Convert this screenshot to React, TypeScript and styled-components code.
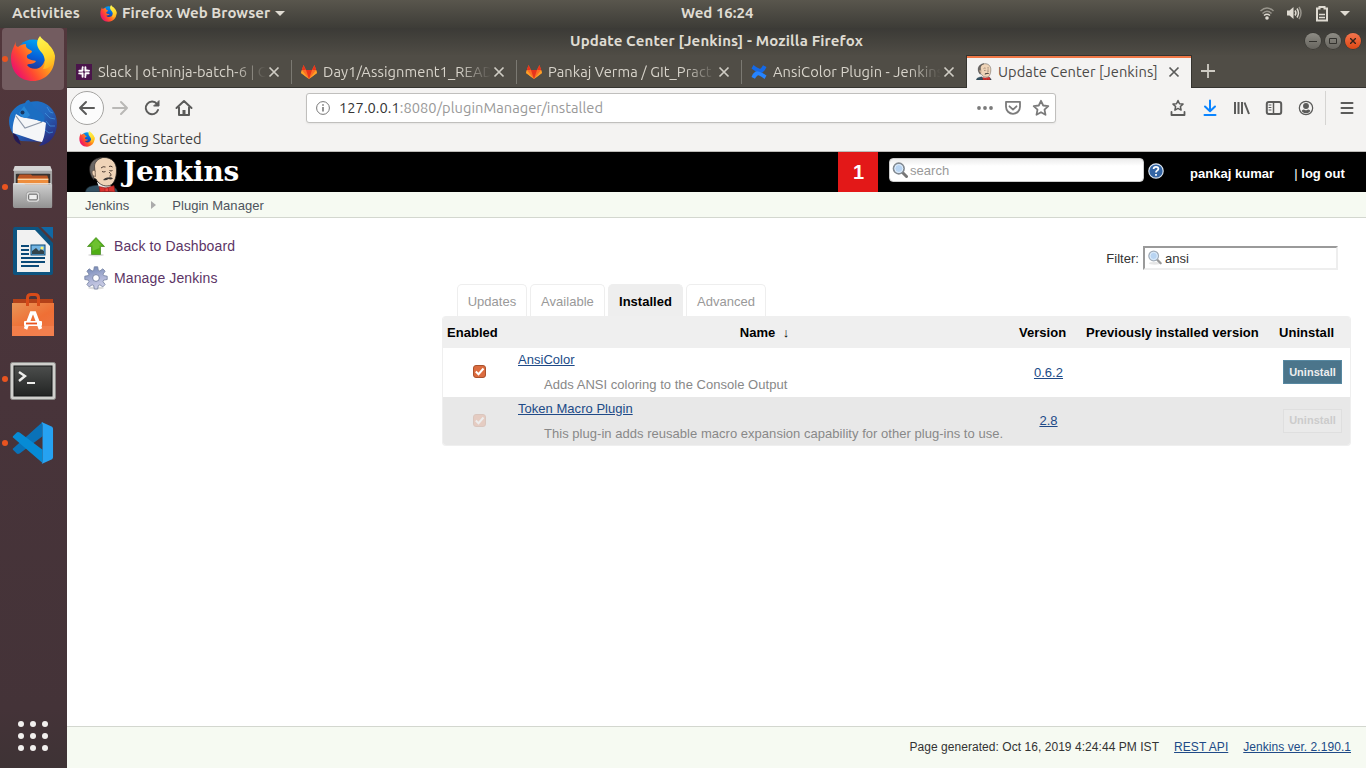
import React from 'react';
import styled, { createGlobalStyle, css } from 'styled-components';

const ui = `"Ubuntu", "Noto Sans", "Open Sans", sans-serif`;
const web = `"Liberation Sans", Arial, sans-serif`;

const Global = createGlobalStyle`
  * { box-sizing: border-box; }
  html, body { margin: 0; padding: 0; overflow: hidden; background: #fff; }
  svg { display: block; flex: none; }
`;

/* ---------- desktop shell ---------- */
const Desktop = styled.div`
  width: 1366px;
  height: 768px;
  display: flex;
  flex-direction: column;
  overflow: hidden;
  font-family: ${ui};
`;
const TopBar = styled.header`
  height: 28px;
  flex: none;
  display: grid;
  grid-template-columns: 669px auto 1fr;
  align-items: center;
  padding: 0 16px 2px 12px;
  background: linear-gradient(#59564d, #3d3c37);
  color: #dfdbd2;
`;
const BarGroup = styled.div<{ $end?: boolean }>`
  display: flex;
  align-items: center;
  height: 26px;
  justify-content: ${p => (p.$end ? 'flex-end' : 'flex-start')};
`;
const BarText = styled.span<{ $ls?: number; $ml?: number }>`
  font-size: 15px;
  font-weight: 600;
  line-height: 20px;
  white-space: nowrap;
  letter-spacing: ${p => p.$ls ?? 0}px;
  margin-left: ${p => p.$ml ?? 0}px;
`;
const Caret = styled.i<{ $ml: number }>`
  border: 5px solid transparent;
  border-top-color: #dfdbd2;
  border-bottom: 0;
  margin-left: ${p => p.$ml}px;
`;
const Spacer = styled.span<{ $w: number }>`
  width: ${p => p.$w}px;
  flex: none;
`;
const Work = styled.div`
  flex: 1;
  display: flex;
  min-height: 0;
`;
const Dock = styled.nav`
  width: 67px;
  flex: none;
  display: flex;
  flex-direction: column;
  gap: 2px;
  background: linear-gradient(#52373c, #48343a 50%, #443338 92%, #3e3335);
`;
const DockItem = styled.div<{ $active?: boolean; $running?: boolean }>`
  position: relative;
  width: 62px;
  height: 62px;
  margin-left: 2px;
  border-radius: 4px;
  display: flex;
  align-items: center;
  justify-content: center;
  background: ${p => (p.$active ? '#735c60' : 'transparent')};
  ${p => p.$running && css`
    &::before {
      content: '';
      position: absolute;
      left: 0;
      top: 28px;
      width: 6px;
      height: 6px;
      border-radius: 50%;
      background: #e95420;
    }
  `}
`;
const AppsButton = styled.div`
  margin: auto 0 17px 18px;
  display: grid;
  grid-template-columns: repeat(3, 6px);
  gap: 6px;
`;
const AppsDot = styled.i`
  width: 6px;
  height: 6px;
  border-radius: 50%;
  background: #f2f0ee;
`;

/* ---------- browser window ---------- */
const Window = styled.main`
  flex: 1;
  display: flex;
  flex-direction: column;
  min-width: 0;
`;
const TitleBar = styled.div`
  height: 27px;
  flex: none;
  display: grid;
  grid-template-columns: 1fr auto 1fr;
  align-items: center;
  padding-bottom: 1px;
  background: linear-gradient(#3b3a36, #4f4c45);
  color: #dfdbd2;
`;
const WinButtons = styled.div`
  display: flex;
  gap: 4px;
  justify-content: flex-end;
  padding-right: 5px;
`;
const WinButton = styled.span<{ $close?: boolean }>`
  width: 16px;
  height: 16px;
  border-radius: 50%;
  display: grid;
  place-items: center;
  background: ${p => (p.$close ? 'linear-gradient(#f4754e, #dd4814)' : 'linear-gradient(#8e8c85, #66645e)')};
  box-shadow: 0 0 0 0.5px #33322e;
`;
const TabStrip = styled.div`
  height: 33px;
  flex: none;
  display: flex;
  background: linear-gradient(#504d46 31px, #504d46 32px, #353430 32px);
`;
const Tab = styled.div<{ $active?: boolean; $divider?: boolean }>`
  position: relative;
  width: 225px;
  height: 33px;
  display: flex;
  align-items: center;
  padding: 0 10px 0 9px;
  gap: 6px;
  color: ${p => (p.$active ? '#4b4a48' : '#d8d4cb')};
  ${p => p.$active && css`
    width: 224px;
    height: 32px;
    margin-top: 1px;
    padding-bottom: 3px;
    background: #f4f3f2;
    border-top: 2px solid #f07746;
    box-shadow: -1px -1px 0 #35342f, 1px -1px 0 #35342f;
    clip-path: inset(-1px -1px 0 -1px);
  `}
  ${p => p.$divider && css`
    &::after {
      content: '';
      position: absolute;
      right: 0;
      top: 5px;
      width: 1px;
      height: 24px;
      background: #7b7972;
    }
  `}
`;
const TabLabel = styled.span<{ $fade?: boolean }>`
  width: 168px;
  flex: none;
  white-space: nowrap;
  font-size: 14.67px;
  line-height: 22px;
  letter-spacing: 0.07px;
  ${p => p.$fade && css`mask-image: linear-gradient(to right, #000 136px, transparent 168px);`}
`;
const TabClose = styled.span`
  margin-left: -4px;
`;
const NewTab = styled.span`
  display: grid;
  place-items: center;
  width: 33px;
  padding-bottom: 1px;
`;
const NavBar = styled.div`
  height: 40px;
  flex: none;
  display: flex;
  align-items: center;
  background: #f4f3f2;
  padding-left: 3px;
`;
const BackButton = styled.span`
  width: 34px;
  height: 34px;
  flex: none;
  border: 1px solid #a5a4a2;
  border-radius: 50%;
  display: grid;
  place-items: center;
  background: #fcfcfc;
`;
const ToolButton = styled.span`
  width: 32px;
  height: 32px;
  flex: none;
  display: grid;
  place-items: center;
`;
const UrlBox = styled.div`
  width: 750px;
  height: 30px;
  flex: none;
  display: flex;
  align-items: center;
  border: 1px solid #c0bfbd;
  border-radius: 3px;
  background: #fff;
  margin: 0 106px;
  padding: 0 5px 0 9px;
  box-shadow: 0 1px 2px rgba(0, 0, 0, 0.06);
`;
const UrlText = styled.span`
  flex: 1;
  font-size: 14.67px;
  line-height: 22px;
  color: #999;
  margin-left: 9px;
  letter-spacing: 0.04px;
`;
const UrlHost = styled.span`
  color: #353535;
`;
const NavRule = styled.i`
  width: 1px;
  height: 34px;
  flex: none;
  margin: 0 5px 0 3px;
  background: #d5d4d2;
`;
const Bookmarks = styled.div`
  height: 24px;
  flex: none;
  display: flex;
  align-items: center;
  gap: 4px;
  padding: 0 12px 1px;
  background: #f4f3f2;
  border-bottom: 1px solid #bdbbb8;
  color: #3f3f3f;
`;
const BookmarkText = styled.span`
  font-size: 14.67px;
  line-height: 20px;
  letter-spacing: 0.05px;
`;

/* ---------- Jenkins page ---------- */
const Page = styled.section`
  flex: 1;
  display: flex;
  flex-direction: column;
  background: #fff;
  font-family: ${web};
  font-size: 13px;
  letter-spacing: 0.03px;
  color: #333;
`;
const Head = styled.div`
  height: 40px;
  flex: none;
  display: flex;
  background: #000;
  padding-left: 18px;
  color: #fff;
`;
const LogoSlot = styled.span`
  width: 34px;
  padding-top: 4px;
`;
const Wordmark = styled.span`
  flex: 1;
  font-family: "DejaVu Serif", serif;
  font-weight: bold;
  font-size: 28px;
  line-height: 40px;
  letter-spacing: -0.2px;
  margin-left: 4px;
`;
const Alert = styled.span`
  width: 40px;
  text-align: center;
  background: #e31818;
  font-size: 20px;
  line-height: 40px;
  font-weight: bold;
  padding-left: 1px;
`;
const HeadSearch = styled.div`
  width: 255px;
  height: 24px;
  margin: 6px 4px 0 11px;
  padding: 0 2px;
  display: flex;
  align-items: center;
  gap: 2px;
  border-radius: 4px;
  border: 1px solid #ccc;
  background: linear-gradient(#ececec, #fff 7px);
  color: #999;
`;
const HelpBox = styled.span`
  margin-top: 11px;
`;
const HeadLinks = styled.div`
  width: 202px;
  padding: 14px 0 0 26px;
  line-height: 16px;
  font-weight: bold;
  display: flex;
  gap: 20px;
  white-space: nowrap;
`;
const Bar = styled.span`
  font-weight: normal;
`;
const Crumbs = styled.div`
  height: 26px;
  flex: none;
  display: flex;
  align-items: center;
  padding: 1px 18px 0;
  background: #f6faf2;
  border-bottom: 1px solid #d3d7cf;
  color: #4d545d;
`;
const CrumbArrow = styled.i`
  border: 4px solid transparent;
  border-left: 5px solid #ababab;
  border-right: 0;
  margin: 0 16px 0 22px;
`;
const Body = styled.div`
  flex: 1;
  display: flex;
`;
const Side = styled.aside`
  width: 375px;
  padding: 16px 0 0 17px;
`;
const SideLink = styled.div`
  height: 32px;
  padding-bottom: 8px;
  display: flex;
  align-items: center;
  gap: 6px;
  color: #5c3566;
  font-size: 14px;
  letter-spacing: 0.12px;
`;
const Main = styled.div`
  width: 909px;
  padding-top: 28px;
`;
const FilterRow = styled.div`
  display: flex;
  justify-content: flex-end;
  align-items: center;
  gap: 4px;
  padding-right: 13px;
`;
const FilterBox = styled.div`
  width: 195px;
  height: 24px;
  border: 2px solid;
  border-color: #9a9a9a #eee #eee #9a9a9a;
  padding-left: 2px;
  display: flex;
  align-items: center;
  gap: 2px;
`;
const PageTabs = styled.div`
  display: flex;
  gap: 3px;
  margin: 14px 0 0 15px;
`;
const PageTab = styled.span<{ $active?: boolean; $w: number }>`
  width: ${p => p.$w}px;
  height: 32px;
  line-height: 33px;
  text-align: center;
  border: 1px solid #eee;
  border-bottom: 0;
  border-radius: 5px 5px 0 0;
  color: ${p => (p.$active ? '#000' : '#999')};
  font-weight: ${p => (p.$active ? 'bold' : 'normal')};
  background: ${p => (p.$active ? '#eee' : '#fff')};
`;
const Table = styled.div`
  border: 1px solid #efefef;
  border-top: 0;
  border-radius: 4px;
  overflow: hidden;
`;
const columns = css`
  display: grid;
  grid-template-columns: 70px 501px 67px 193px 76px;
`;
const HeadRow = styled.div`
  ${columns}
  height: 32px;
  line-height: 33px;
  background: #efefef;
  color: #000;
  font-weight: bold;
`;
const HeadCell = styled.span<{ $name?: boolean }>`
  padding-left: ${p => (p.$name ? 2 : 5)}px;
  text-align: ${p => (p.$name ? 'center' : 'left')};
  white-space: pre;
`;
const FirstHeadCell = styled(HeadCell)`
  padding-left: 4px;
`;
const Row = styled.div<{ $alt?: boolean }>`
  ${columns}
  height: ${p => (p.$alt ? 48 : 49)}px;
  background: ${p => (p.$alt ? '#e8e8e8' : '#fff')};
`;
const CheckCell = styled.div<{ $dim?: boolean }>`
  padding: 17px 0 0 29.500px;
  opacity: ${p => (p.$dim ? 0.22 : 1)};
`;
const NameCell = styled.div`
  padding: 3px 0 0 5px;
`;
const Link = styled.a`
  color: #204a87;
  text-decoration: underline;
  line-height: 17px;
`;
const Excerpt = styled.div`
  margin: 8px 0 0 26px;
  line-height: 17px;
  color: #888;
  white-space: nowrap;
`;
const VersionCell = styled.div<{ $alt?: boolean }>`
  padding: ${p => (p.$alt ? 15 : 16)}px 0 0 2px;
  text-align: center;
`;
const Uninstall = styled.span<{ $off?: boolean }>`
  width: 59px;
  height: 24px;
  margin: 12px 0 0 9px;
  font-size: 11px;
  line-height: ${p => (p.$off ? 21 : 22)}px;
  font-weight: bold;
  text-align: center;
  border: 1px solid ${p => (p.$off ? '#dfdfdf' : '#5788a1')};
  background: ${p => (p.$off ? '#eaeaea' : '#4b758b')};
  color: ${p => (p.$off ? '#ccc' : '#eee')};
`;
const Footer = styled.footer`
  height: 42px;
  flex: none;
  display: flex;
  justify-content: flex-end;
  align-items: center;
  gap: 15px;
  padding: 0 15px 1px 0;
  font-size: 12px;
  letter-spacing: 0.05px;
  background: #f6faf2;
  border-top: 1px solid #d3d7cf;
`;

/* ---------- icons ---------- */
const Firefox = ({ size, id }: { size: number; id: string }) => (
  <svg width={size} height={size} viewBox="-1 0 46 46">
    <defs>
      <linearGradient id={id + 'a'} x1="0.95" y1="0.2" x2="0.1" y2="0.75">
        <stop offset="0" stopColor="#ffd226" /><stop offset="0.35" stopColor="#ff9a1b" />
        <stop offset="0.7" stopColor="#ff4a30" /><stop offset="1" stopColor="#ee1568" />
      </linearGradient>
      <linearGradient id={id + 'b'} x1="0.7" y1="0" x2="0.4" y2="1">
        <stop offset="0" stopColor="#00a8f5" /><stop offset="0.5" stopColor="#0560d8" /><stop offset="1" stopColor="#302175" />
      </linearGradient>
      <linearGradient id={id + 'c'} x1="0.4" y1="0" x2="0.6" y2="1">
        <stop offset="0" stopColor="#fff44f" /><stop offset="0.6" stopColor="#ffd92b" /><stop offset="1" stopColor="#ffae1e" />
      </linearGradient>
    </defs>
    <circle cx="22" cy="21" r="17.500" fill={`url(#${id}b)`} />
    <path d="M5 5 C4 9 5 10 7 11 C9 9 12 8 15 8 C14 12 18 13 21 15 C21 18 16 18 16 20 C15 23 19 24 25 25 C23 29 18 27 16 29 C19 34 30 35 33 26 C36 22 37 16 36 10 L43 18 C46 32 36 45 22 45 C9 45 0 36 0 22 C0 15 3 11 5 5Z" fill={`url(#${id}a)`} />
    <path d="M29 0 C24 6 26 12 31 17 C34 21 35 27 32 33 C39 33 44 27 44 20 C43 15 41 12 38 9 C37 6 32 5 29 0Z" fill={`url(#${id}c)`} />
  </svg>
);
const Thunderbird = () => (
  <svg width="48" height="48" viewBox="0 0 48 48">
    <defs>
      <linearGradient id="tb" x1="0" y1="0" x2="0.7" y2="1">
        <stop stopColor="#1679cc" /><stop offset="0.55" stopColor="#2468bf" /><stop offset="1" stopColor="#2b2c7d" />
      </linearGradient>
    </defs>
    <path d="M20 1 L21 3 C35 -1 48 10 48 24 C48 37 40 46 30 47 L33 43 L12 42 C5 38 0 31 0 22 C0 12 9 5 16 4 C17 2 18 1 20 1Z" fill="url(#tb)" />
    <path d="M4 33 L9 38 L12 46 C6 43 4 39 4 33Z" fill="#251a55" />
    <path d="M7 15 L12 18 L33 22 L37 24 C36 31 36 37 33 43 L28 42 L4 34 C3 27 5 21 7 15Z" fill="#f5f6f8" />
    <path d="M7 17 L16 29 L33 23" fill="none" stroke="#8d97a8" strokeWidth="1.2" />
    <path d="M21 2 C14 7 14 14 20 18 L33 23 C38 21 35 15 31 13 C27 11 24 8 21 2Z" fill="#1c6ec2" />
    <path d="M10 14 L15 7 L21 16 L18 19 Q12 19 10 14Z" fill="#2787d5" />
    <circle cx="13.500" cy="13.500" r="2" fill="#173862" />
    <path d="M38 8 l3 5 l3 1 M36 14 l5 5 l5 1 M37 22 l4 5 l5 0 M36 31 l4 3 l4 -1" stroke="#4698df" strokeWidth="1" opacity="0.7" fill="none" />
  </svg>
);
const FilesIcon = () => (
  <svg width="42" height="44" viewBox="0 0 44 46">
    <defs>
      <linearGradient id="fl" x1="0" x2="0" y1="0" y2="1"><stop stopColor="#d0d0d0" /><stop offset="1" stopColor="#929292" /></linearGradient>
    </defs>
    <path d="M3 1 h37 l2 5 v37 q0 2 -2 2 h-36 q-2 0 -2 -2 v-37Z" fill="#a6a6a6" />
    <path d="M3 1 h37 l2 5 h-41Z" fill="#d4d4d4" />
    <rect x="4" y="9" width="36" height="14" rx="1" fill="#373432" />
    <path d="M6 13 l2 -3 h12 l1 1 h16 l1 3 v6 h-32Z" fill="#b95524" />
    <rect x="6" y="14" width="32" height="7" fill="#ee8d3c" />
    <path d="M6 15 h32" stroke="#f8d8b0" strokeWidth="1.2" />
    <path d="M1 19 h11 l2 1 h28 v24 q0 1 -2 1 h-37 q-2 0 -2 -2Z" fill="url(#fl)" />
    <path d="M2 19.500 h39" stroke="#ececec" />
    <rect x="15" y="28" width="14" height="11" rx="3" fill="#ddd" stroke="#999" />
    <rect x="17.500" y="30.500" width="9" height="6" rx="1" fill="#eee" stroke="#555" />
  </svg>
);
const WriterIcon = () => (
  <svg width="42" height="50" viewBox="0 0 42 50">
    <path d="M3 1 h23 l15 16 v30 q0 2 -2 2 h-35 q-3 0 -3 -2 v-43 q0 -3 2 -3Z" fill="#0d5480" />
    <path d="M5 4 h18 l15 16 v26 h-33Z" fill="#f1f1f1" />
    <path d="M29 1 h12 v12Z" fill="#1068a4" />
    <path d="M9 20 h8 M9 24 h8 M9 28 h8 M9 32 h24 M9 36 h24 M9 40 h18" stroke="#0b4a78" strokeWidth="2" />
    <rect x="19" y="19" width="14" height="10" fill="#72b4e2" stroke="#0b4a78" />
    <path d="M20 28 v-3 l4 -3 l3 3 l2 -2 l3 2 v3Z" fill="#32434b" />
    <circle cx="30" cy="22" r="1.500" fill="#fff36b" />
  </svg>
);
const SoftwareIcon = () => (
  <svg width="44" height="46" viewBox="0 1 44 46">
    <defs><linearGradient id="sw" x1="0" x2="0.7" y1="0" y2="1"><stop stopColor="#e99557" /><stop offset="0.6" stopColor="#ef6f35" /><stop offset="1" stopColor="#ed7443" /></linearGradient></defs>
    <path d="M2 8 h40 v5 h-40Z" fill="#b44119" />
    <path d="M1 12 h42 v33 h-42Z" fill="url(#sw)" />
    <path d="M1 35 h42 v10 h-42Z" fill="#f58756" opacity="0.6" />
    <path d="M16.500 15 v-8 q0 -3.500 3.500 -3.500 h4 q3.500 0 3.500 3.500 v8" fill="none" stroke="#d84b19" strokeWidth="3" />
    <path d="M14.500 38 L20.500 22 h3 L29.500 38" fill="none" stroke="#fff" strokeWidth="3.600" />
    <rect x="13" y="30" width="18" height="5" rx="1" fill="#fff" />
    <path d="M15 32.500 h11" stroke="#e95420" strokeWidth="1.800" />
  </svg>
);
const TerminalIcon = () => (
  <svg width="46" height="42" viewBox="0 -4 46 42">
    <defs><linearGradient id="tm" x1="0" x2="0" y1="0" y2="1"><stop stopColor="#4c4e4d" /><stop offset="1" stopColor="#222423" /></linearGradient></defs>
    <rect x="0.500" y="0.500" width="45" height="37" rx="2" fill="#cfcfcc" stroke="#8b8b89" />
    <rect x="4" y="4" width="38" height="30" fill="url(#tm)" stroke="#151716" />
    <path d="M9 10 l6 4 l-6 5" fill="none" stroke="#eeeeec" strokeWidth="2.400" />
    <path d="M17 21 h8" stroke="#eeeeec" strokeWidth="2" />
  </svg>
);
const CodeIcon = () => (
  <svg width="42" height="42" viewBox="0 0 44 44">
    <path d="M1 29 L5 33 Q6 34 8 33 L32 15 V0 L2 27 Q0 28 1 29Z" fill="#0a72b8" />
    <path d="M1 15 L5 11 Q6 10 8 11 L32 29 V43 L2 17 Q0 16 1 15Z" fill="#068bd5" />
    <path d="M31 0 L42 5 Q43 6 43 7 V37 Q43 38 42 39 L31 44 Q32 43 32 40 V3Z" fill="#26a2f2" />
  </svg>
);
const SlackIcon = () => (
  <svg width="16" height="16" viewBox="0 0 16 16">
    <rect width="16" height="16" fill="#4a154b" />
    <path d="M6.400 6.700 H3.300 M6.700 3.200 v.3 M9.400 3.300 V6.700 M12.700 6.600 h.3 M9.600 9.300 H12.700 M9.300 12.700 v.3 M6.600 12.700 V9.300 M3.200 9.400 h.3 M6.500 4.500 v2 M9.500 6.500 h2 M9.500 9.500 v2 M6.500 9.500 h-2" stroke="#fff" strokeWidth="1.900" strokeLinecap="round" />
  </svg>
);
const GitlabIcon = () => (
  <svg width="16" height="16" viewBox="0 0 16 16">
    <path d="M2.500 1 L0 9 L8 15 L16 9 L13.500 1 L11 6 H5Z" fill="#fc6d26" />
    <path d="M5 6 H11 L8 15Z" fill="#e8341c" />
    <path d="M0.800 6 L0 9 L8 15Z M15.200 6 L16 9 L8 15Z" fill="#fca326" />
    <path d="M2.500 1 L0.800 6 H5Z M13.500 1 L11 6 H15.200Z" fill="#e8341c" />
  </svg>
);
const ConfluenceIcon = () => (
  <svg width="16" height="16" viewBox="0 0 16 16">
    <path d="M2.500 1 L0.500 4.500 Q8 10 11.500 8.500 Q14 7 15.500 3 L12 1.200 Q10 5 8.500 4.800 Q6 4 2.500 1Z" fill="#1469e8" />
    <path d="M13.500 15 L15.500 11.500 Q8 6 4.500 7.500 Q2 9 0.500 13 L4 14.800 Q6 11 7.500 11.200 Q10 12 13.500 15Z" fill="#2684ff" />
  </svg>
);
const Butler = ({ w, h }: { w: number; h: number }) => (
  <svg width={w} height={h} viewBox="0 0 34 36" preserveAspectRatio="none">
    <path d="M0.500 36 Q1 31 7 30 L13 29 L28 31 Q32 32 32.500 36Z" fill="#335061" stroke="#1b2a33" strokeWidth="0.600" />
    <path d="M12 26 L14 31 L22 33 L27 31 L24 28Z" fill="#f4f1ee" />
    <path d="M7 20 C4 12 8 2 18 1.500 C27 1 31.500 7 31.500 14 C31.500 22 29 30 22 30 C17 30 13 27 11 23 Q8 23 7 20Z" fill="#efd4b8" stroke="#2b2724" strokeWidth="0.800" />
    <path d="M5 17 C3 8 8 2 17 1.500 C12 4 10 6 9.500 10 L10 16 L8.500 17 L9 24 Q6 21 5 17Z" fill="#6a6765" stroke="#25201f" strokeWidth="0.600" />
    <path d="M10 14.500 Q7 13.500 7 17 Q7.500 20.500 10.500 20.500Z" fill="#efd4b8" stroke="#5d4a3d" strokeWidth="0.700" />
    <path d="M16 12 q2 -2 4.500 -1 M24 10.500 q2 -1 3.500 0.500 M17 15.500 q2 1 3.500 0 M24.500 14.500 q1.500 1 3 0 M24 16 q4 4 0.500 4" stroke="#3b2d25" fill="none" strokeWidth="0.900" />
    <path d="M18 24 q2 -3 5 -2.500 q3 -1 5 1 q-2 1.500 -4.500 0.500 q-2.500 2 -5.500 1Z" fill="#3d3835" />
    <path d="M14 30.500 L21 32 L29 29.500 L30 36 L22.500 35.500 L15 36Z" fill="#d8332e" stroke="#821d1a" strokeWidth="0.600" />
    <path d="M20 32 h3.500 v3.500 h-3.500Z" fill="#ef3d3a" stroke="#821d1a" strokeWidth="0.500" />
  </svg>
);
const Close = ({ c }: { c: string }) => (
  <svg width="12" height="12" viewBox="0 0 12 12"><path d="M1.500 1.500 l9 9 M10.500 1.500 l-9 9" stroke={c} strokeWidth="1.700" /></svg>
);
const Star = ({ s = 18 }: { s?: number }) => (
  <svg width={s} height={s} viewBox="0 0 18 18"><path d="M9 1.800 l2.200 4.700 5.100 .6 -3.800 3.500 1 5.200 -4.500 -2.600 -4.500 2.600 1 -5.200 -3.800 -3.500 5.100 -.6Z" fill="none" stroke="#7b7b7b" strokeWidth="1.800" strokeLinejoin="round" /></svg>
);
const Glyph = ({ children, c = '#5b5b5a', s = 18, w = 2 }: { children: React.ReactNode; c?: string; s?: number; w?: number }) => (
  <svg width={s} height={s} viewBox="0 0 18 18" fill="none" stroke={c} strokeWidth={w} strokeLinecap="round" strokeLinejoin="round">{children}</svg>
);
const Magnifier = ({ soft }: { soft?: boolean }) => (
  <svg width="16" height="16" viewBox={soft ? '-0.500 0 17.500 17.500' : '0 0 16 16'}>
    {soft && <ellipse cx="8" cy="14.500" rx="6.500" ry="1.500" fill="#e6e6e6" />}
    <path d="M10.500 10.500 l4 4" stroke={soft ? '#999' : '#777'} strokeWidth={soft ? 2.4 : 3} strokeLinecap="round" />
    <circle cx="6.800" cy="6.500" r="5.300" fill="#b8d4f2" stroke={soft ? '#a3adb8' : '#838a91'} strokeWidth={soft ? 1.3 : 1.7} />
    <circle cx="6.800" cy="6.500" r="4" fill="none" stroke="#e3effb" />
  </svg>
);
const HelpIcon = () => (
  <svg width="16" height="16" viewBox="0 0 16 16">
    <circle cx="8" cy="8" r="7.200" fill="#3465a4" stroke="#dbe5f1" strokeWidth="1.200" />
    <path d="M5.600 6 Q5.700 3.800 8 3.800 Q10.400 3.800 10.400 5.800 Q10.400 7 9 7.700 Q8 8.200 8 9.500 M8 11 v1.800" fill="none" stroke="#fff" strokeWidth="1.800" />
  </svg>
);
const UpArrow = () => (
  <svg width="24" height="24" viewBox="0 0 24 24">
    <ellipse cx="12" cy="21" rx="8" ry="1.500" fill="#ddd" />
    <path d="M12 3.500 L20.500 12.500 H16.500 V20.500 H7.500 V12.500 H3.500Z" fill="#4fae14" stroke="#4e8f2a" strokeWidth="0.800" />
    <path d="M12 5 L18 11.500 H15.500 V14 L8.500 17 V11.500 H6Z" fill="#8bd34b" opacity="0.5" />
  </svg>
);
const Gear = () => (
  <svg width="24" height="24" viewBox="0 0 24 24">
    <defs><linearGradient id="gr" x1="0.2" x2="0.5" y1="0" y2="1"><stop stopColor="#7388b5" /><stop offset="0.6" stopColor="#b0b6d8" /><stop offset="1" stopColor="#cdcfe6" /></linearGradient></defs>
    <ellipse cx="12" cy="22" rx="8" ry="1.500" fill="#ddd" />
    <path d="M10.300 .8 h3.400 l.6 3.600 1.600 .6 2.900 -2.200 2.300 2.400 -2.100 2.900 .7 1.500 3.500 .6 v3.300 l-3.500 .6 -.7 1.500 2.100 2.900 -2.300 2.400 -2.900 -2.100 -1.600 .7 -.6 3.500 h-3.400 l-.6 -3.500 -1.600 -.7 -2.900 2.100 -2.300 -2.400 2.100 -2.900 -.7 -1.500 -3.500 -.6 v-3.300 l3.500 -.6 .7 -1.500 -2.100 -2.900 2.300 -2.400 2.900 2.200 1.600 -.6Z" fill="url(#gr)" stroke="#74809f" strokeWidth="0.800" />
    <circle cx="12" cy="12" r="3.400" fill="#fff" stroke="#7985a6" />
  </svg>
);
const Checkbox = () => (
  <svg width="13" height="13" viewBox="0 0 13 13">
    <rect x="0.500" y="0.500" width="12" height="12" rx="2.500" fill="#dc6c3f" stroke="#a9522e" />
    <path d="M2.800 6.500 l2.700 2.700 l5 -5.700" fill="none" stroke="#fff" strokeWidth="2" />
  </svg>
);

const dock = [
  { icon: <Firefox size={46} id="dock" />, active: true, running: true },
  { icon: <Thunderbird /> },
  { icon: <FilesIcon />, running: true },
  { icon: <WriterIcon /> },
  { icon: <SoftwareIcon /> },
  { icon: <TerminalIcon />, running: true },
  { icon: <CodeIcon />, running: true },
];
const tabs = [
  { icon: <SlackIcon />, label: 'Slack | ot-ninja-batch-6 | O', divider: true },
  { icon: <GitlabIcon />, label: 'Day1/Assignment1_READ', divider: true },
  { icon: <GitlabIcon />, label: 'Pankaj Verma / GIt_Pract', divider: true },
  { icon: <ConfluenceIcon />, label: 'AnsiColor Plugin - Jenkins' },
  { icon: <Butler w={16} h={17} />, label: 'Update Center [Jenkins]', active: true },
];

export default function App() {
  return (
    <Desktop>
      <Global />
      <TopBar>
        <BarGroup>
          <BarText $ls={0.12}>Activities</BarText>
          <Spacer $w={20} />
          <Firefox size={17} id="top" />
          <BarText $ml={5} $ls={0.05}>Firefox Web Browser</BarText>
          <Caret $ml={5} />
        </BarGroup>
        <BarText>Wed 16:24</BarText>
        <BarGroup $end>
          <svg width="16" height="16" viewBox="0 0 16 16" fill="none" stroke="#dfdbd2" strokeWidth="1.500">
            <path d="M1.500 6 Q8 0 14.500 6 M3.500 8.500 Q8 4 12.500 8.500" opacity="0.5" />
            <path d="M5 10.500 Q8 8 11 10.500" /><circle cx="8" cy="13" r="1.800" fill="#dfdbd2" stroke="none" />
          </svg>
          <Spacer $w={11} />
          <svg width="17" height="16" viewBox="0 0 17 16" fill="none" stroke="#dfdbd2" strokeWidth="1.500">
            <path d="M1 5.500 h2.500 L7.500 2 v12 L3.500 10.500 H1Z" fill="#dfdbd2" stroke="none" />
            <path d="M9 5.500 q1.800 2.500 0 5 M11 3.500 q3 4.500 0 9" /><path d="M13 2 q4 6 0 12" opacity="0.5" />
          </svg>
          <Spacer $w={12} />
          <svg width="14" height="17" viewBox="0 0 14 17" fill="none" stroke="#dfdbd2" strokeWidth="2">
            <path d="M2 3.500 h2.500 v-1.500 h5 v1.500 h2.500 v12 h-10Z" /><path d="M4 9.500 h6 M4 12.500 h6" strokeWidth="1.400" />
          </svg>
          <Caret $ml={11} />
        </BarGroup>
      </TopBar>
      <Work>
        <Dock>
          {dock.map((d, i) => <DockItem key={i} $active={d.active} $running={d.running}>{d.icon}</DockItem>)}
          <AppsButton>{Array.from({ length: 9 }, (_, i) => <AppsDot key={i} />)}</AppsButton>
        </Dock>
        <Window>
          <TitleBar>
            <span />
            <BarText $ls={0.14}>Update Center [Jenkins] - Mozilla Firefox</BarText>
            <WinButtons>
              <WinButton><svg width="8" height="8"><path d="M0 4.500 h8" stroke="#33322e" /></svg></WinButton>
              <WinButton><svg width="8" height="8"><path d="M0.500 1.500 h7 v5 h-7Z" stroke="#33322e" fill="none" /></svg></WinButton>
              <WinButton $close><svg width="6" height="6"><path d="M0 0 l6 6 M6 0 l-6 6" stroke="#33221a" strokeWidth="1.400" /></svg></WinButton>
            </WinButtons>
          </TitleBar>
          <TabStrip>
            {tabs.map(t => (
              <Tab key={t.label} $active={t.active} $divider={t.divider}>
                {t.icon}
                <TabLabel $fade={!t.active}>{t.label}</TabLabel>
                <TabClose><Close c={t.active ? '#5b5b5a' : '#cfccc4'} /></TabClose>
              </Tab>
            ))}
            <NewTab><svg width="14" height="14"><path d="M7 0 v14 M0 7 h14" stroke="#cfccc4" strokeWidth="1.800" /></svg></NewTab>
          </TabStrip>
          <NavBar>
            <BackButton><Glyph><path d="M16 9 H2 M8 3 L2 9 L8 15" /></Glyph></BackButton>
            <ToolButton><Glyph c="#b9b8b6"><path d="M2 9 H16 M10 3 L16 9 L10 15" /></Glyph></ToolButton>
            <ToolButton><Glyph><path d="M14 5 A6.300 6.300 0 1 0 15 11" /><path d="M16 2 V7 H11Z" fill="#5b5b5a" strokeWidth="1" /></Glyph></ToolButton>
            <ToolButton><Glyph><path d="M1.500 9 L9 2 L16.500 9 M4 8.500 V16 H14 V8.500" /><path d="M9 15 v-4" strokeWidth="3" strokeLinecap="butt" /></Glyph></ToolButton>
            <UrlBox>
              <svg width="14" height="14" viewBox="0 0 14 14" fill="none" stroke="#777"><circle cx="7" cy="7" r="6.400" /><path d="M7 6 v4.500 M7 3.300 v1.500" strokeWidth="1.600" /></svg>
              <UrlText><UrlHost>127.0.0.1</UrlHost>:8080/pluginManager/installed</UrlText>
              <svg width="16" height="6"><circle cx="2" cy="3" r="1.900" fill="#7b7b7b" /><circle cx="8" cy="3" r="1.900" fill="#7b7b7b" /><circle cx="14" cy="3" r="1.900" fill="#7b7b7b" /></svg>
              <Spacer $w={11} />
              <Glyph c="#7b7b7b" w={1.8}><path d="M2 2.800 h14 v5 a7 7 0 0 1 -14 0Z M5.500 7.300 l3.500 3.300 l3.500 -3.300" /></Glyph>
              <Spacer $w={10} />
              <Star />
            </UrlBox>
            <ToolButton><Glyph w={1.8}><path d="M9 1.500 l1.500 3.200 3.500 .4 -2.600 2.400 .7 3.600 -3.100 -1.700 -3.100 1.700 .7 -3.600 -2.600 -2.400 3.500 -.4Z" strokeWidth="1.500" /><path d="M2.500 13 v3 h13 v-3" /></Glyph></ToolButton>
            <ToolButton><Glyph c="#0a84ff"><path d="M9 1.500 V12 M4 7.500 L9 12.300 L14 7.500 M3.500 16 h11" /></Glyph></ToolButton>
            <ToolButton><Glyph><path d="M2 3 V15 M5.500 3 V15 M9 3 V15 M11.500 3.500 L16 15" strokeLinecap="butt" /></Glyph></ToolButton>
            <ToolButton><Glyph><rect x="1.800" y="3" width="14.400" height="12" rx="2" /><path d="M8.500 3 v12" strokeWidth="1.500" /><path d="M4 6 h2 M4 8.500 h2 M4 11 h2" strokeWidth="1" /></Glyph></ToolButton>
            <ToolButton><Glyph s={16} w={1.4}><circle cx="9" cy="9" r="7.500" /><circle cx="9" cy="6.800" r="2.600" fill="#5b5b5a" /><path d="M5 12.300 Q6 11 7 11.500 Q9 13 11 11.500 Q12 11 13 12.300 Q9 16 5 12.300Z" fill="#5b5b5a" /></Glyph></ToolButton>
            <NavRule />
            <ToolButton><Glyph><path d="M3.500 4 h11 M3.500 9 h11 M3.500 14 h11" /></Glyph></ToolButton>
          </NavBar>
          <Bookmarks><Firefox size={16} id="bm" /><BookmarkText>Getting Started</BookmarkText></Bookmarks>
          <Page>
            <Head>
              <LogoSlot><Butler w={34} h={36} /></LogoSlot>
              <Wordmark>Jenkins</Wordmark>
              <Alert>1</Alert>
              <HeadSearch><Magnifier />search</HeadSearch>
              <HelpBox><HelpIcon /></HelpBox>
              <HeadLinks><span>pankaj kumar</span><span><Bar>|</Bar> log out</span></HeadLinks>
            </Head>
            <Crumbs>Jenkins<CrumbArrow />Plugin Manager</Crumbs>
            <Body>
              <Side>
                <SideLink><UpArrow />Back to Dashboard</SideLink>
                <SideLink><Gear />Manage Jenkins</SideLink>
              </Side>
              <Main>
                <FilterRow>Filter:<FilterBox><Magnifier soft />ansi</FilterBox></FilterRow>
                <PageTabs>
                  <PageTab $w={70}>Updates</PageTab>
                  <PageTab $w={75}>Available</PageTab>
                  <PageTab $w={75} $active>Installed</PageTab>
                  <PageTab $w={80}>Advanced</PageTab>
                </PageTabs>
                <Table>
                  <HeadRow>
                    <FirstHeadCell>Enabled</FirstHeadCell>
                    <HeadCell $name>{'Name  ↓'}</HeadCell>
                    <HeadCell>Version</HeadCell>
                    <HeadCell>Previously installed version</HeadCell>
                    <HeadCell>Uninstall</HeadCell>
                  </HeadRow>
                  <Row>
                    <CheckCell><Checkbox /></CheckCell>
                    <NameCell><Link>AnsiColor</Link><Excerpt>Adds ANSI coloring to the Console Output</Excerpt></NameCell>
                    <VersionCell><Link>0.6.2</Link></VersionCell>
                    <span />
                    <Uninstall>Uninstall</Uninstall>
                  </Row>
                  <Row $alt>
                    <CheckCell $dim><Checkbox /></CheckCell>
                    <NameCell><Link>Token Macro Plugin</Link><Excerpt>This plug-in adds reusable macro expansion capability for other plug-ins to use.</Excerpt></NameCell>
                    <VersionCell $alt><Link>2.8</Link></VersionCell>
                    <span />
                    <Uninstall $off>Uninstall</Uninstall>
                  </Row>
                </Table>
              </Main>
            </Body>
            <Footer><span>Page generated: Oct 16, 2019 4:24:44 PM IST</span><Link>REST API</Link><Link>Jenkins ver. 2.190.1</Link></Footer>
          </Page>
        </Window>
      </Work>
    </Desktop>
  );
}
